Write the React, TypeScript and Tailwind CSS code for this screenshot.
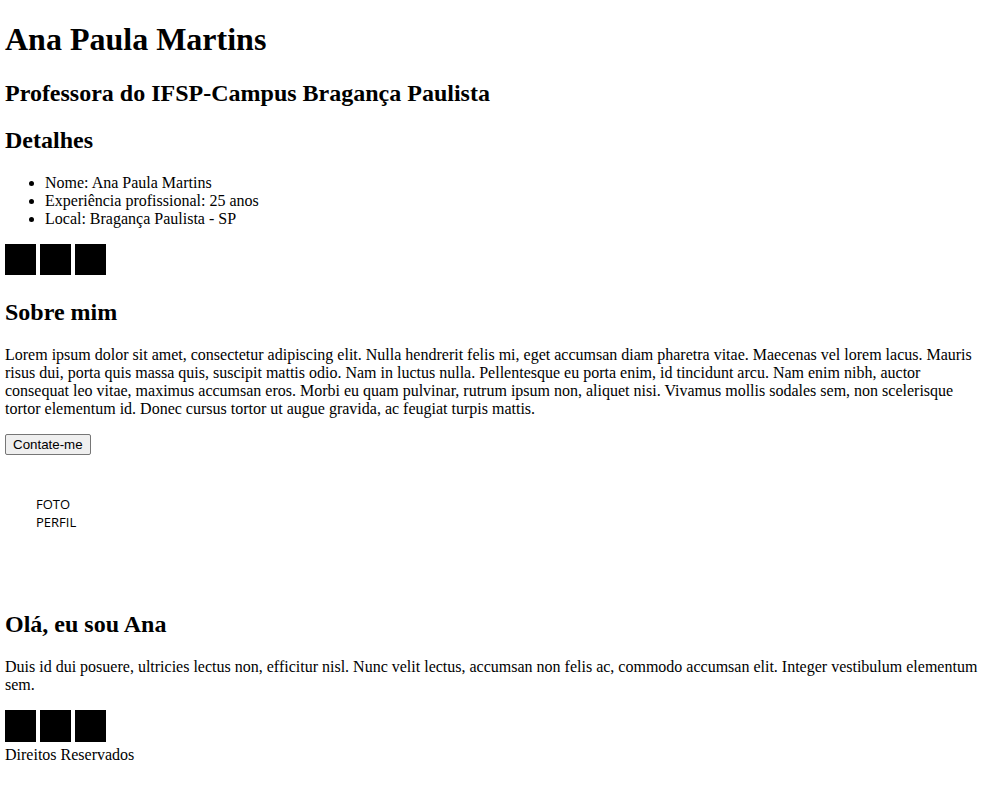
import React from "react";

function Squares({ h }: { h: "a" | "b" }) {
  const cls =
    h === "a"
      ? "inline-block w-[31px] h-[31px] bg-black align-baseline"
      : "inline-block w-[31px] h-[32px] bg-black align-baseline";
  return (
    <div>
      <span className={cls}></span>{" "}
      <span className={cls}></span>{" "}
      <span className={cls}></span>
    </div>
  );
}

export default function App() {
  return (
    <div className="mx-[5px] my-[8px] font-['Liberation_Serif',serif] text-[16px] leading-[normal] text-black bg-white">
      <header>
        <h1 className="text-[32px] font-bold my-[21.44px]">Ana Paula Martins</h1>
        <h2 className="text-[24px] font-bold my-[19.92px]">Professora do IFSP-Campus Bragança Paulista</h2>
      </header>
      <section>
        <h2 className="text-[24px] font-bold my-[19.92px]">Detalhes</h2>
        <ul className="list-disc pl-10 my-4">
          <li>Nome: Ana Paula Martins</li>
          <li>Experiência profissional: 25 anos</li>
          <li>Local: Bragança Paulista - SP</li>
        </ul>
        <Squares h="a" />
      </section>
      <section>
        <h2 className="text-[24px] font-bold my-[19.92px]">Sobre mim</h2>
        <p className="my-4">
          Lorem ipsum dolor sit amet, consectetur adipiscing elit. Nulla hendrerit felis mi, eget accumsan diam pharetra vitae. Maecenas vel lorem lacus. Mauris risus dui, porta quis massa quis, suscipit mattis odio. Nam in luctus nulla. Pellentesque eu porta enim, id tincidunt arcu. Nam enim nibh, auctor consequat leo vitae, maximus accumsan eros. Morbi eu quam pulvinar, rutrum ipsum non, aliquet nisi. Vivamus mollis sodales sem, non scelerisque tortor elementum id. Donec cursus tortor ut augue gravida, ac feugiat turpis mattis.
        </p>
        <div>
          <button className="inline-block font-['Liberation_Sans',Arial,sans-serif] text-[13.333px] leading-[normal] bg-[#efefef] border border-[#767676] rounded-[2px] px-[7px] py-[2px] text-black">
            Contate-me
          </button>
        </div>
      </section>
      <section className="h-[137px]">
        <div className="pt-[40px] pl-[31px] w-[90px] font-['Open_Sans',sans-serif] text-[13px] leading-[18px]">
          FOTO PERFIL
        </div>
      </section>
      <section>
        <h2 className="text-[24px] font-bold my-[19.92px]">Olá, eu sou Ana</h2>
        <p className="my-4">
          Duis id dui posuere, ultricies lectus non, efficitur nisl. Nunc velit lectus, accumsan non felis ac, commodo accumsan elit. Integer vestibulum elementum sem.
        </p>
      </section>
      <footer>
        <Squares h="b" />
        <div>Direitos Reservados</div>
      </footer>
    </div>
  );
}
